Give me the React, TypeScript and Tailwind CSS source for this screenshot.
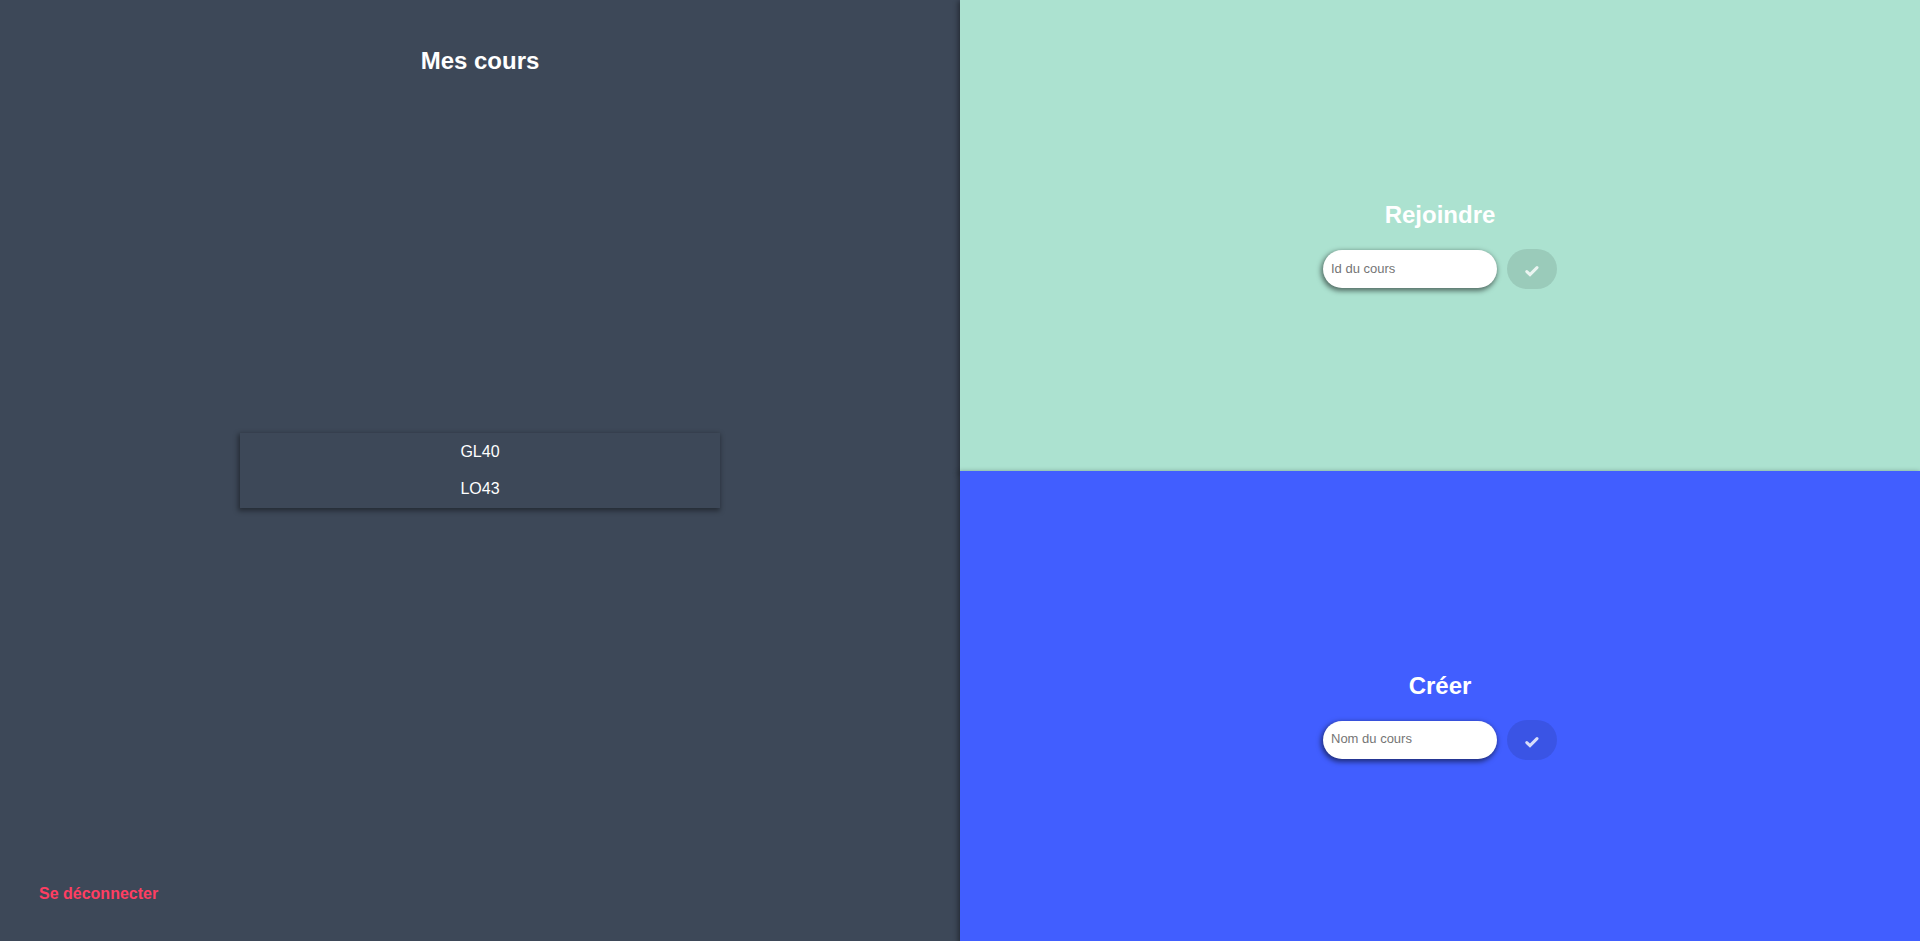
import { useState } from "react";

const courses = ["GL40", "LO43"];

function CheckIcon() {
  return (
    <svg viewBox="0 0 14 14" className="mt-1 size-3.5" aria-hidden="true">
      <path
        d="M1.8 7.6 L5 10.6 L12 3.6"
        fill="none"
        stroke="currentColor"
        strokeWidth="3"
        strokeLinecap="round"
        strokeLinejoin="miter"
      />
    </svg>
  );
}

type CourseFormProps = {
  title: string;
  label: string;
  className: string;
};

function CourseForm({ title, label, className }: CourseFormProps) {
  const [value, setValue] = useState("");
  return (
    <section
      className={`flex flex-1 flex-col items-center justify-center pt-5 shadow-[-1px_2px_5px_1px_rgba(0,0,0,0.4)] ${className}`}
    >
      <h2 className="mb-5 text-2xl leading-7 font-bold text-white">{title}</h2>
      <form
        className="flex items-center gap-2.5"
        onSubmit={(event) => event.preventDefault()}
      >
        <input
          type="text"
          aria-label={label}
          placeholder={label}
          value={value}
          onChange={(event) => setValue(event.target.value)}
          className="h-[38px] w-[174px] rounded-full bg-white px-2 pb-0.5 text-[13px] text-black shadow-[-1px_2px_5px_1px_rgba(0,0,0,0.5)] outline-none placeholder:text-[#757575]"
        />
        <button
          type="submit"
          aria-label={title}
          disabled={value === ""}
          className="flex h-10 w-[50px] items-center justify-center rounded-[20px] bg-black/10 text-white/80"
        >
          <CheckIcon />
        </button>
      </form>
    </section>
  );
}

export default function App() {
  return (
    <main className="flex min-h-screen overflow-hidden font-['Liberation_Sans',Arial,sans-serif]">
      <section className="grid w-1/2 grid-rows-[1fr_auto_1fr] bg-[#3d4858]">
        <h1 className="pt-[47px] text-center text-2xl leading-7 font-bold text-white">
          Mes cours
        </h1>
        <ul className="w-1/2 justify-self-center pb-px text-center text-base text-white shadow-[-1px_2px_5px_1px_rgba(0,0,0,0.4)]">
          {courses.map((course) => (
            <li key={course} className="h-[37px] leading-[37px]">
              <a href="#">{course}</a>
            </li>
          ))}
        </ul>
        <button
          type="button"
          className="mb-[35px] ml-[39px] self-end justify-self-start text-base font-bold text-[#ff3e62]"
        >
          Se déconnecter
        </button>
      </section>
      <div className="flex w-1/2 flex-col">
        <CourseForm title="Rejoindre" label="Id du cours" className="bg-[#ace2d0]" />
        <CourseForm title="Créer" label="Nom du cours" className="bg-[#415eff]" />
      </div>
    </main>
  );
}
